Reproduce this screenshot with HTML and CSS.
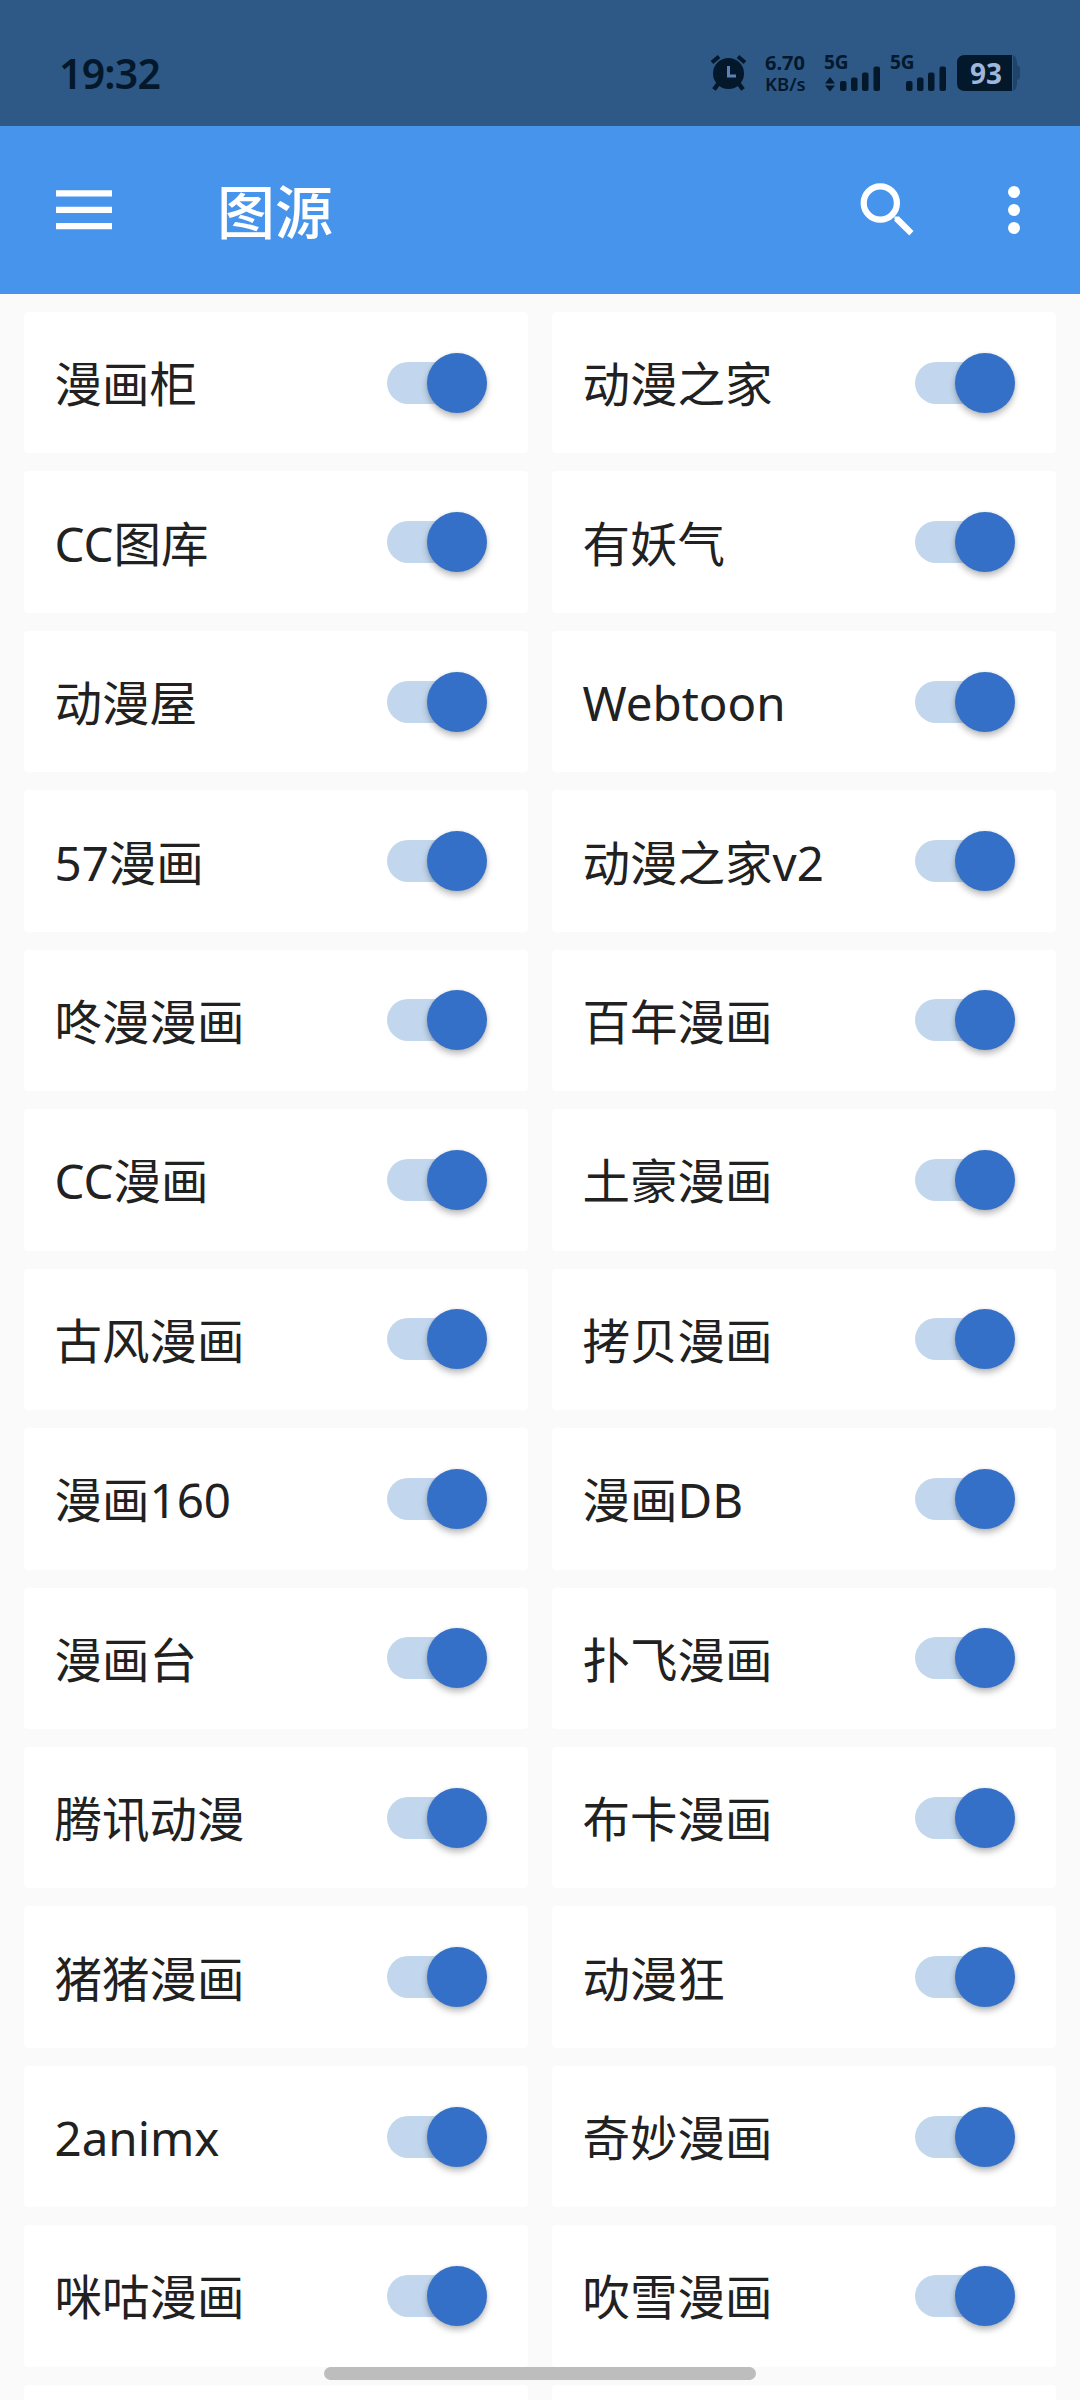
FILE: index.html
```
<!DOCTYPE html>
<html lang="zh-CN">
<head>
<meta charset="utf-8">
<title>图源</title>
<link rel="stylesheet" href="styles.css">
</head>
<body>
<div class="screen">
  <div class="status">
    <span class="clock">19:32</span>
    <div class="indicators">
      <svg class="alarm" width="38" height="38" viewBox="0 0 38 38">
        <circle cx="18.5" cy="19.5" r="15.5" fill="currentColor"/>
        <path d="M2 8.500L9 2.500M35 8.500L28 2.500" stroke="currentColor" stroke-width="4" fill="none"/>
        <path d="M8 30L4 35.500M29 30L33 35.500" stroke="currentColor" stroke-width="4.500" fill="none"/>
        <path d="M18.500 12V22H26" stroke="#5c82b4" stroke-width="3" fill="none"/>
      </svg>
      <div class="speed"><span>6.70</span><span>KB/s</span></div>
      <svg class="signal" width="56" height="38" viewBox="0 0 56 38">
        <text x="-1" y="15" class="net">5G</text>
        <path d="M0 29.500L5 23L10 29.500ZM0 31.500L5 37.500L10 31.500Z" fill="currentColor"/>
        <g fill="currentColor"><rect x="15" y="27" width="6.500" height="10" rx="2"/><rect x="26" y="23.500" width="6.500" height="13.500" rx="2"/><rect x="37" y="18.500" width="6.500" height="18.500" rx="2"/><rect x="48.500" y="12.500" width="6.500" height="24.500" rx="2"/></g>
      </svg>
      <svg class="signal second" width="56" height="38" viewBox="0 0 56 38">
        <text x="-1" y="15" class="net">5G</text>
        <g fill="currentColor"><rect x="15" y="27" width="6.500" height="10" rx="2"/><rect x="26" y="23.500" width="6.500" height="13.500" rx="2"/><rect x="37" y="18.500" width="6.500" height="18.500" rx="2"/><rect x="48.500" y="12.500" width="6.500" height="24.500" rx="2"/></g>
      </svg>
      <svg class="battery" width="64" height="38" viewBox="0 0 64 38">
        <path d="M56 1Q60 3 60 9V11Q63 12 63 15V22Q63 25 60 26V29Q60 35 56 37Z" fill="#1f4468"/>
        <path d="M8 1H55V37H8Q0 37 0 29V9Q0 1 8 1Z" fill="currentColor"/>
        <text x="29" y="29.500" text-anchor="middle" class="level">93</text>
      </svg>
    </div>
  </div>
  <header class="appbar">
    <svg class="menu" width="56" height="40" viewBox="0 0 56 40"><path d="M0 3.300H56M0 19.800H56M0 36.200H56" stroke="#fff" stroke-width="6.300"/></svg>
    <h1 class="title">图源</h1>
    <svg class="search" width="54" height="54" viewBox="0 0 54 54"><circle cx="20.300" cy="20" r="16.600" fill="none" stroke="#fff" stroke-width="6.200"/><path d="M34.500 33.500H39L53.500 48L49.300 52.500L34.500 38Z" fill="#fff"/></svg>
    <svg class="more" width="12" height="50" viewBox="0 0 12 50"><g fill="#fff"><circle cx="6" cy="7" r="6"/><circle cx="6" cy="25" r="6"/><circle cx="6" cy="43" r="6"/></g></svg>
  </header>
  <main class="grid">
    <div class="card"><span>漫画柜</span><i class="toggle"></i></div>
    <div class="card"><span>动漫之家</span><i class="toggle"></i></div>
    <div class="card"><span>CC图库</span><i class="toggle"></i></div>
    <div class="card"><span>有妖气</span><i class="toggle"></i></div>
    <div class="card"><span>动漫屋</span><i class="toggle"></i></div>
    <div class="card"><span>Webtoon</span><i class="toggle"></i></div>
    <div class="card"><span>57漫画</span><i class="toggle"></i></div>
    <div class="card"><span>动漫之家v2</span><i class="toggle"></i></div>
    <div class="card"><span>咚漫漫画</span><i class="toggle"></i></div>
    <div class="card"><span>百年漫画</span><i class="toggle"></i></div>
    <div class="card"><span>CC漫画</span><i class="toggle"></i></div>
    <div class="card"><span>土豪漫画</span><i class="toggle"></i></div>
    <div class="card"><span>古风漫画</span><i class="toggle"></i></div>
    <div class="card"><span>拷贝漫画</span><i class="toggle"></i></div>
    <div class="card"><span>漫画160</span><i class="toggle"></i></div>
    <div class="card"><span>漫画DB</span><i class="toggle"></i></div>
    <div class="card"><span>漫画台</span><i class="toggle"></i></div>
    <div class="card"><span>扑飞漫画</span><i class="toggle"></i></div>
    <div class="card"><span>腾讯动漫</span><i class="toggle"></i></div>
    <div class="card"><span>布卡漫画</span><i class="toggle"></i></div>
    <div class="card"><span>猪猪漫画</span><i class="toggle"></i></div>
    <div class="card"><span>动漫狂</span><i class="toggle"></i></div>
    <div class="card"><span>2animx</span><i class="toggle"></i></div>
    <div class="card"><span>奇妙漫画</span><i class="toggle"></i></div>
    <div class="card"><span>咪咕漫画</span><i class="toggle"></i></div>
    <div class="card"><span>吹雪漫画</span><i class="toggle"></i></div>
    <div class="card"></div>
    <div class="card"></div>
  </main>
  <div class="homebar"></div>
</div>
</body>
</html>
```
FILE: styles.css
```
* { box-sizing: border-box; }
body { margin: 0; background: #fafafa; }
.screen {
  position: relative;
  width: 1080px;
  height: 2400px;
  overflow: hidden;
  display: flex;
  flex-direction: column;
  background: #fafafa;
  font-family: "Noto Sans", "Noto Sans CJK SC", sans-serif;
  color: #212121;
}
.status {
  flex: none;
  height: 126px;
  padding: 20px 59px 0 59px;
  display: flex;
  align-items: center;
  justify-content: space-between;
  background: #2e5986;
  color: #04182c;
}
.clock { font-size: 41px; font-weight: 600; line-height: 60px; letter-spacing: -0.8px; }
.indicators { display: flex; align-items: center; }
.indicators svg { display: block; flex: none; overflow: visible; }
.speed {
  width: 44px;
  margin: 0 16px 0 17px;
  display: flex;
  flex-direction: column;
  font-size: 20px;
  font-weight: 700;
  line-height: 21px;
  white-space: nowrap;
}
.speed span + span { font-size: 18.5px; font-weight: 600; }
.net { font-size: 19px; font-weight: 700; fill: currentColor; }
.second { margin-left: 10px; }
.battery { margin-left: 10px; }
.level { font-size: 28px; font-weight: 700; fill: #9fb6dc; }
.appbar {
  flex: none;
  height: 168px;
  padding: 0 60px 0 56px;
  display: flex;
  align-items: center;
  background: #4794ec;
}
.appbar svg { display: block; }
.title {
  margin: 3px auto 0 105px;
  font-size: 58px;
  line-height: 84px;
  font-weight: 500;
  color: #fff;
}
.search { margin-right: 94px; }
.grid {
  flex: none;
  display: grid;
  grid-template-columns: 504px 504px;
  grid-auto-rows: 141.45px;
  gap: 18px 24px;
  padding: 18px 24px 0;
}
.card {
  display: flex;
  align-items: center;
  justify-content: space-between;
  padding: 0 41px 0 30.5px;
  border-radius: 4px;
  background: #fff;
  font-size: 47.5px;
  line-height: 70px;
}
.card span { padding-top: 3px; }
.toggle { display: grid; width: 100px; height: 60px; align-items: center; }
.toggle::before, .toggle::after { content: ""; grid-area: 1 / 1; }
.toggle::before { width: 84px; height: 42px; border-radius: 21px; background: #c2d7ed; }
.toggle::after {
  width: 60px;
  height: 60px;
  justify-self: end;
  border-radius: 50%;
  background: #3570c8;
  box-shadow: 0 4px 6px rgba(0, 0, 0, .26), 0 0 3px rgba(0, 0, 0, .1);
}
.homebar {
  position: absolute;
  left: 324px;
  top: 2367px;
  width: 432px;
  height: 13px;
  border-radius: 7px;
  background: #bdbdbd;
}
```
